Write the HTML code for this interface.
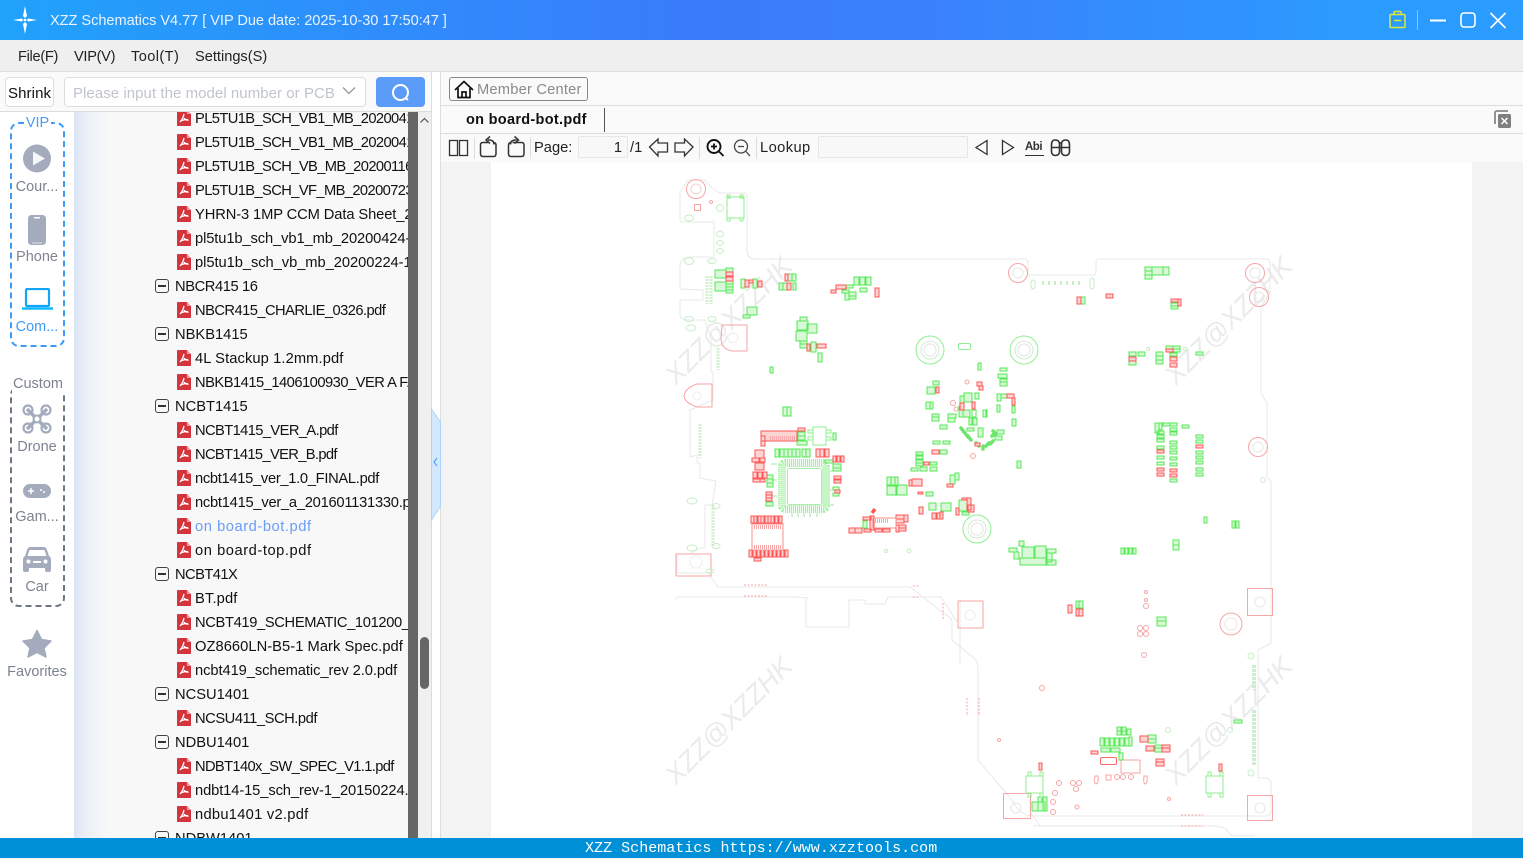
<!DOCTYPE html>
<html><head><meta charset="utf-8"><style>
*{box-sizing:border-box}
html,body{margin:0;padding:0;width:1523px;height:858px;overflow:hidden;background:#f3f3f3;font-family:"Liberation Sans","Noto Sans CJK SC",sans-serif;color:#111}
.a{position:absolute}
#title{left:0;top:0;width:1523px;height:40px;background:linear-gradient(90deg,#20a2fb 0,#3a7cfb 45%,#3a80fb 60%,#2b9cff 90%)}
#title .t{position:absolute;left:50px;top:1px;line-height:40px;font-size:14.6px;color:#e8f3ff;white-space:nowrap;letter-spacing:-.05px}
#menu{left:0;top:40px;width:1523px;height:32px;background:#efefef;border-bottom:1px solid #dcdcdc;font-size:14.6px}
#menu span{position:absolute;top:0;line-height:35px;color:#222}
#search{left:0;top:72px;width:431px;height:40px;background:#fafafa;border-bottom:1px solid #dcdcdc}
.box{position:absolute;top:5px;height:30px;border:1px solid #ddd;border-radius:4px;background:#fff;line-height:31px;font-size:15px}
#side{left:0;top:112px;width:74px;height:726px;background:#fff}
.lab{position:absolute;left:0;width:74px;text-align:center;font-size:14.5px;color:#7c8290;line-height:20px}
#tree{left:74px;top:112px;width:334px;height:726px;overflow:hidden;background:linear-gradient(90deg,#dbe5f5 0,#ebf0f8 12px,#f8f8f8 35px)}
#tree .in{position:absolute;left:0;top:-6px;width:334px}
.r{position:relative;height:24px;line-height:26px;font-size:14.7px;white-space:nowrap;color:#111}
.f{padding-left:121px}
.d{padding-left:101px}
.f svg{position:absolute;left:103px;top:4px}
.d i{position:absolute;left:81px;top:5px;width:14px;height:14px;border:1px solid #444;border-radius:3px}
.d i:after{content:"";position:absolute;left:2px;top:5px;width:8px;height:1.5px;background:#333}
</style></head><body>
<svg width="0" height="0" style="position:absolute"><defs>
<symbol id="pdf" viewBox="0 0 14 16"><path d="M1 0H10L14 4V15Q14 16 13 16H1Q0 16 0 15V1Q0 0 1 0Z" fill="#d5343c"/><path d="M10 0L14 4H10Z" fill="#f0a0a4"/><path d="M7 4C6.400 7 5 10 3 12M7 8C8.500 10 10 10.500 11.500 10.200M4 11C6 9.800 9 9.500 11 9.500" fill="none" stroke="#fff" stroke-width="1.300"/></symbol>
</defs></svg>

<div class="a" id="title">
<svg class="a" style="left:10px;top:4px" width="30" height="32" viewBox="0 0 30 32"><path d="M15 2L17 12L15 14L13 12ZM15 30L17 20L15 18L13 20ZM3 16L12 14.500L13 16L12 17.500ZM27 16L18 14.500L17 16L18 17.500Z" fill="#fff"/><circle cx="15" cy="16" r="1.400" fill="#fff"/></svg>
<div class="t">XZZ Schematics V4.77 [ VIP Due date: 2025-10-30 17:50:47 ]</div>
<svg class="a" style="left:1385px;top:8px" width="125" height="24" viewBox="0 0 125 24" fill="none"><path d="M6 6.500H19Q20 6.500 20 7.500V18.500Q20 19.500 19 19.500H6Q5 19.500 5 18.500V7.500Q5 6.500 6 6.500ZM9 6.500V4.500Q9 3.500 10 3.500H15Q16 3.500 16 4.500V6.500M9 12.500H16" stroke="#dfe63c" stroke-width="1.500"/><path d="M32.500 2V22" stroke="#8cc6ff" stroke-width="1"/><path d="M45 12.500H61" stroke="#fff" stroke-width="2"/><rect x="76" y="5" width="14" height="14" rx="3" stroke="#fff" stroke-width="1.600"/><path d="M105.500 5L120.500 20M120.500 5L105.500 20" stroke="#fff" stroke-width="1.600"/></svg>
</div>

<div class="a" id="menu"><span style="left:18px;letter-spacing:-.3px">File(F)</span><span style="left:74px;letter-spacing:-.3px">VIP(V)</span><span style="left:131px;letter-spacing:.4px">Tool(T)</span><span style="left:195px">Settings(S)</span></div>

<div class="a" id="search">
<div class="box" style="left:5px;width:49px;padding-left:2px;color:#111;letter-spacing:.1px">Shrink</div>
<div class="box" style="left:64px;width:302px;padding-left:8px;color:#c0c4cc;letter-spacing:.05px">Please input the model number or PCB
<svg class="a" style="left:277px;top:8px" width="14" height="10" viewBox="0 0 14 10" fill="none"><path d="M1 1.500L7 7.500L13 1.500" stroke="#999" stroke-width="1.300"/></svg></div>
<div class="a" style="left:376px;top:5px;width:49px;height:30px;background:#5a9cf8;border-radius:4px"><svg width="49" height="30" fill="none"><circle cx="24.500" cy="15.500" r="7.500" stroke="#fff" stroke-width="2"/><path d="M29.500 21L32 23" stroke="#fff" stroke-width="2"/></svg></div>
</div>

<div class="a" id="side">
<div class="a" style="left:10px;top:10px;width:55px;height:225px;border:2px dashed #3c9bf8;border-radius:9px"></div>
<div class="a" style="left:24px;top:3px;width:27px;height:16px;background:#fff;text-align:center;color:#4a9cf5;font-size:14.5px;line-height:16px">VIP</div>
<svg class="a" style="left:22px;top:32px" width="30" height="30"><circle cx="15" cy="14.500" r="14" fill="#a3abbd"/><path d="M11 7.500L23 14.500L11 21.500Z" fill="#fff" opacity=".9"/></svg>
<div class="lab" style="top:65px">Cour...</div>
<svg class="a" style="left:27px;top:103px" width="20" height="30"><rect x="1" y="0" width="18" height="30" rx="3.500" fill="#a3abbd"/><rect x="7" y="2" width="6" height="1.500" fill="#fff"/><rect x="5" y="27.500" width="10" height="1" fill="#e0e3ea"/></svg>
<div class="lab" style="top:135px;color:#80858f">Phone</div>
<svg class="a" style="left:22px;top:176px" width="31" height="24" fill="none"><rect x="4" y="1" width="23" height="17" rx="1" stroke="#12a5f5" stroke-width="2.200"/><path d="M0 20.500H31" stroke="#12b8ff" stroke-width="2.600"/></svg>
<div class="lab" style="top:205px;color:#3c9bf8">Com...</div>

<div class="a" style="left:10px;top:274px;width:55px;height:221px;border:2px dashed #6e7585;border-radius:9px"></div>
<div class="a" style="left:12px;top:263px;width:52px;height:18px;background:#fff;text-align:center;color:#7c8290;font-size:14.5px;line-height:18px">Custom</div>
<svg class="a" style="left:22px;top:292px" width="30" height="30" fill="none" stroke="#a3abbd"><g stroke-width="3.500"><path d="M5 5L25 25M25 5L5 25"/></g><g stroke-width="2.200"><circle cx="6" cy="6" r="4.500"/><circle cx="24" cy="6" r="4.500"/><circle cx="6" cy="24" r="4.500"/><circle cx="24" cy="24" r="4.500"/></g><circle cx="15" cy="15" r="3.500" fill="#fff" stroke-width="2"/></svg>
<div class="lab" style="top:325px">Drone</div>
<svg class="a" style="left:23px;top:372px" width="28" height="14"><rect width="28" height="14" rx="7" fill="#a3abbd"/><path d="M5 7H11M8 4V10" stroke="#fff" stroke-width="1.500"/><circle cx="18" cy="6" r="1" fill="#fff"/><circle cx="21" cy="8" r="1" fill="#fff"/></svg>
<div class="lab" style="top:395px">Gam...</div>
<svg class="a" style="left:23px;top:435px" width="28" height="25"><path d="M7 0H21Q23 0 24 3L26 9Q28 10 28 13V23Q28 25 26 25H24Q22 25 22 23V21H6V23Q6 25 4 25H2Q0 25 0 23V13Q0 10 2 9L4 3Q5 0 7 0Z" fill="#a3abbd"/><path d="M6.500 3H21.500L23.500 9H4.500Z" fill="#fff"/><circle cx="5.500" cy="14.500" r="2" fill="#fff"/><circle cx="22.500" cy="14.500" r="2" fill="#fff"/><rect x="10" y="14" width="8" height="2" fill="#fff"/></svg>
<div class="lab" style="top:465px">Car</div>
<svg class="a" style="left:22px;top:517px" width="30" height="30"><path d="M15 1.500L19.500 10.500L29 12L22 19L24 28L15 23.500L6 28L8 19L1 12L10.500 10.500Z" fill="#a3abbd" stroke="#a3abbd" stroke-width="1.500" stroke-linejoin="round"/></svg>
<div class="lab" style="top:550px">Favorites</div>
</div>

<div class="a" id="tree"><div class="in">
<div class="r f" style="letter-spacing:-.6px"><svg width="14" height="16"><use href="#pdf"/></svg>PL5TU1B_SCH_VB1_MB_20200417.pdf</div>
<div class="r f" style="letter-spacing:-.6px"><svg width="14" height="16"><use href="#pdf"/></svg>PL5TU1B_SCH_VB1_MB_20200417.pdf</div>
<div class="r f" style="letter-spacing:-.6px"><svg width="14" height="16"><use href="#pdf"/></svg>PL5TU1B_SCH_VB_MB_20200116.pdf</div>
<div class="r f" style="letter-spacing:-.6px"><svg width="14" height="16"><use href="#pdf"/></svg>PL5TU1B_SCH_VF_MB_20200723.pdf</div>
<div class="r f" style="letter-spacing:-.1px"><svg width="14" height="16"><use href="#pdf"/></svg>YHRN-3 1MP CCM Data Sheet_20.pdf</div>
<div class="r f" style="letter-spacing:-.1px"><svg width="14" height="16"><use href="#pdf"/></svg>pl5tu1b_sch_vb1_mb_20200424-1.pdf</div>
<div class="r f" style="letter-spacing:-.05px"><svg width="14" height="16"><use href="#pdf"/></svg>pl5tu1b_sch_vb_mb_20200224-1.pdf</div>
<div class="r d" style="letter-spacing:-.4px"><i></i>NBCR415 16</div>
<div class="r f" style="letter-spacing:-.54px"><svg width="14" height="16"><use href="#pdf"/></svg>NBCR415_CHARLIE_0326.pdf</div>
<div class="r d"><i></i>NBKB1415</div>
<div class="r f" style="letter-spacing:.1px"><svg width="14" height="16"><use href="#pdf"/></svg>4L Stackup 1.2mm.pdf</div>
<div class="r f" style="letter-spacing:-.5px"><svg width="14" height="16"><use href="#pdf"/></svg>NBKB1415_1406100930_VER A F.pdf</div>
<div class="r d"><i></i>NCBT1415</div>
<div class="r f" style="letter-spacing:-.6px"><svg width="14" height="16"><use href="#pdf"/></svg>NCBT1415_VER_A.pdf</div>
<div class="r f" style="letter-spacing:-.65px"><svg width="14" height="16"><use href="#pdf"/></svg>NCBT1415_VER_B.pdf</div>
<div class="r f" style="letter-spacing:-.3px"><svg width="14" height="16"><use href="#pdf"/></svg>ncbt1415_ver_1.0_FINAL.pdf</div>
<div class="r f" style="letter-spacing:-.25px"><svg width="14" height="16"><use href="#pdf"/></svg>ncbt1415_ver_a_201601131330.pdf</div>
<div class="r f" style="color:#6a9cf8;letter-spacing:.55px"><svg width="14" height="16"><use href="#pdf"/></svg>on board-bot.pdf</div>
<div class="r f" style="letter-spacing:.55px"><svg width="14" height="16"><use href="#pdf"/></svg>on board-top.pdf</div>
<div class="r d" style="letter-spacing:-.55px"><i></i>NCBT41X</div>
<div class="r f" style="letter-spacing:.15px"><svg width="14" height="16"><use href="#pdf"/></svg>BT.pdf</div>
<div class="r f" style="letter-spacing:-.35px"><svg width="14" height="16"><use href="#pdf"/></svg>NCBT419_SCHEMATIC_101200_IN.pdf</div>
<div class="r f" style="letter-spacing:.05px"><svg width="14" height="16"><use href="#pdf"/></svg>OZ8660LN-B5-1 Mark Spec.pdf</div>
<div class="r f" style="letter-spacing:-.07px"><svg width="14" height="16"><use href="#pdf"/></svg>ncbt419_schematic_rev 2.0.pdf</div>
<div class="r d"><i></i>NCSU1401</div>
<div class="r f" style="letter-spacing:-.45px"><svg width="14" height="16"><use href="#pdf"/></svg>NCSU411_SCH.pdf</div>
<div class="r d"><i></i>NDBU1401</div>
<div class="r f" style="letter-spacing:-.64px"><svg width="14" height="16"><use href="#pdf"/></svg>NDBT140x_SW_SPEC_V1.1.pdf</div>
<div class="r f" style="letter-spacing:-.1px"><svg width="14" height="16"><use href="#pdf"/></svg>ndbt14-15_sch_rev-1_20150224.pdf</div>
<div class="r f" style="letter-spacing:.27px"><svg width="14" height="16"><use href="#pdf"/></svg>ndbu1401 v2.pdf</div>
<div class="r d"><i></i>NDBW1401</div>
</div></div>

<div class="a" style="left:408px;top:112px;width:10px;height:726px;background:#666"></div>
<div class="a" style="left:418px;top:112px;width:13px;height:726px;background:#f0f0f0"></div>
<svg class="a" style="left:418px;top:114px" width="13" height="12" fill="none"><path d="M2.500 8.500L6.500 4.500L10.500 8.500" stroke="#444" stroke-width="1"/></svg>
<div class="a" style="left:420px;top:637px;width:9px;height:52px;background:#666;border-radius:5px"></div>
<div class="a" style="left:431px;top:72px;width:10px;height:766px;background:#fdfffd;border-left:1px solid #ddd;border-right:1px solid #ddd"></div>
<svg class="a" style="left:431px;top:408px" width="10" height="114"><path d="M0.500 1L9.500 14V98L0.500 112Z" fill="#d3e7fd" stroke="#aed4fb"/><path d="M6 50L3 54L6 58" fill="none" stroke="#5aa8f5" stroke-width="1.200"/></svg>

<div class="a" style="left:441px;top:72px;width:1082px;height:34px;background:#fafafa;border-bottom:1px solid #dcdcdc"></div>
<div class="a" style="left:449px;top:77px;width:139px;height:24px;border:1px solid #888;border-radius:3px;line-height:24px;font-size:14.7px;color:#8a8a8a;padding-left:27px;letter-spacing:.2px;white-space:nowrap">Member Center
<svg class="a" style="left:4px;top:2px" width="20" height="19" fill="none"><path d="M1 10L10 1.500L19 10M4 8V17.500H16V8M8 17.500V12H12V17.500" stroke="#111" stroke-width="1.700"/></svg></div>
<div class="a" style="left:441px;top:106px;width:1082px;height:28px;background:#fafafa;border-bottom:1px solid #dcdcdc"></div>
<div class="a" style="left:466px;top:107px;line-height:26px;font-size:14.5px;font-weight:bold;color:#111;letter-spacing:.3px">on board-bot.pdf</div>
<div class="a" style="left:604px;top:108px;width:1px;height:24px;background:#555"></div>
<svg class="a" style="left:1493px;top:109px" width="20" height="21" fill="none"><path d="M2 15V4Q2 2 4 2H15" stroke="#888" stroke-width="1.800"/><rect x="5" y="5" width="13" height="14" rx="1.500" fill="#808080"/><path d="M8.500 9L14.500 15M14.500 9L8.500 15" stroke="#fff" stroke-width="1.500"/></svg>

<div class="a" style="left:441px;top:134px;width:1082px;height:28px;background:#fafafa"></div>
<svg class="a" style="left:441px;top:134px" width="640" height="28" fill="none" stroke="#333" stroke-width="1.300">
<rect x="8.500" y="6.500" width="8" height="15"/><rect x="18.500" y="6.500" width="8" height="15"/>
<path d="M33.500 3V25M89.500 3V25M258.500 3V25M315.500 3V25" stroke="#ddd" stroke-width="1"/>
<path d="M47 8.500H42Q39.500 8.500 39.500 11V19.500Q39.500 22.500 42 22.500H52.500Q55 22.500 55 19.500V11Q55 9 53 8.500" stroke-width="1.500"/><path d="M53 10.500Q53 5.500 47 6M49 2.500L45 6L49 9.500" stroke-width="1.500"/>
<path d="M71.500 8.500H80.500Q83 8.500 83 11V19.500Q83 22.500 80.500 22.500H70Q67.500 22.500 67.500 19.500V11Q67.500 9 69.500 8.500" stroke-width="1.500"/><path d="M69.500 10.500Q69.500 5.500 75.500 6M73.500 2.500L77.500 6L73.500 9.500" stroke-width="1.500"/>
<path d="M208.500 13L217 5V9H226.500V18H217V22Z" stroke-width="1.300"/>
<path d="M252 13L243.500 5V9H234V18H243.500V22Z" stroke-width="1.300"/>
<circle cx="273" cy="12.500" r="6.500" stroke="#111" stroke-width="1.900"/><path d="M278 17.500L282.500 22M270 12.500H276M273 9.500V15.500" stroke="#111" stroke-width="1.800"/>
<circle cx="300" cy="12.500" r="6.500" stroke="#444"/><path d="M305 17.500L309 22M297 12.500H303" stroke="#444"/>
<path d="M546 6.500L535 13.500L546 20.500Z"/><path d="M561.500 6.500L572.500 13.500L561.500 20.500Z"/>
<path d="M584 21.500H603" stroke-width="1"/>
<path d="M610.500 18V11Q610.500 6 614 6Q618.500 6 618.500 10V18A4 3.500 0 1 1 610.500 18ZM620.500 18V10Q620.500 6 625 6Q628.500 6 628.500 11V18A4 3.500 0 1 1 620.500 18Z" stroke-width="1.600"/><path d="M611 13.500H628M618 9H621" stroke-width="1.500"/>
</svg>
<div class="a" style="left:1025px;top:140px;font-size:11.5px;line-height:14px;font-weight:bold;color:#333;letter-spacing:-.5px">Abi</div>
<div class="a" style="left:534px;top:134px;line-height:28px;font-size:14.7px;color:#222">Page:</div>
<div class="a" style="left:578px;top:136px;width:50px;height:22px;background:#f8f8f8;border:1px solid #e6e6e6;border-radius:2px;text-align:right;padding-right:5px;line-height:22px;font-size:14.7px;color:#222">1</div>
<div class="a" style="left:630px;top:134px;line-height:28px;font-size:14.7px;color:#222">/1</div>
<div class="a" style="left:760px;top:134px;line-height:28px;font-size:14.7px;color:#222;letter-spacing:.4px">Lookup</div>
<div class="a" style="left:818px;top:136px;width:150px;height:22px;background:#f8f8f8;border:1px solid #e6e6e6;border-radius:2px"></div>

<div class="a" style="left:491px;top:162px;width:981px;height:676px;background:#fff"></div>

<svg class="a" style="left:0;top:0" width="1523" height="858" fill="none">
<g font-family="Liberation Sans,sans-serif" font-size="27" fill="#ebebeb" stroke="none" font-style="italic">
<text transform="translate(676,386) rotate(-45)">XZZ@XZZHK</text>
<text transform="translate(1176,386) rotate(-45)">XZZ@XZZHK</text>
<text transform="translate(676,786) rotate(-45)">XZZ@XZZHK</text>
<text transform="translate(1176,786) rotate(-45)">XZZ@XZZHK</text>
</g>
<!-- outline -->
<path stroke="#e8e8e8" d="M680 192L688 180H705Q712 190 720 193H744Q747 193 747 197V252Q748 259 756 259H1024Q1028 259 1028 263V275H1094Q1096 275 1096 271V262Q1096 259 1100 259H1266Q1270 259 1270 263V293L1261 307V393L1267 403V477L1271 481V643L1258 650V778H1268Q1271 780 1271 784V811Q1271 816 1266 816H1033Q1020 816 1012 800L978 760V668Q978 660 970 655L952 640V622Q952 618 946 615L910 587H718L708 573H677V554H690Q700 547 705 548V505H712L716 481L700 478V463H697V455L690 457V410L713 400V372L711 372V340L705 320H690Q680 320 680 315V300H703V290L680 289V266Q680 258 690 257H714V222H682Q680 222 680 218Z"/>
<path stroke="#e8e8e8" d="M676 597H795L808 598H806V627H849V600H865V604H885L888 597H941L957 622M806 597V627M1033 826H1215L1225 828L1232 836H1255M676 600V598M960 600V665M1030 800V812L1040 826"/>
<!-- red rings -->
<g stroke="#f7a6a6">
<circle cx="696" cy="189" r="9.500"/><circle cx="696" cy="189" r="5" stroke="#f3d0d0"/><rect x="694.500" y="204.500" width="6" height="6"/><circle cx="711" cy="202" r="1.500"/>
<path d="M722 325H747V351H732Q721 349 721 338Z"/><circle cx="733" cy="338" r="5" stroke="#eee"/>
<path d="M712 384V407H697Q685 403 684 396Q685 388 697 384Z"/><circle cx="697" cy="396" r="4" stroke="#eee"/>
<rect x="676" y="554" width="35" height="22"/><circle cx="696" cy="562" r="6" stroke="#eee"/>
<rect x="958" y="601" width="25" height="27"/><circle cx="970" cy="615" r="5" stroke="#eee"/>
<circle cx="1018" cy="273" r="9.500"/><circle cx="1018" cy="273" r="5" stroke="#e8e8e8"/>
<circle cx="1255" cy="273" r="9.500"/><circle cx="1255" cy="273" r="5" stroke="#e8e8e8"/>
<circle cx="1259" cy="297" r="9.500"/><circle cx="1259" cy="297" r="5" stroke="#e8e8e8"/>
<circle cx="1258" cy="447" r="9.500"/><circle cx="1258" cy="447" r="5" stroke="#e8e8e8"/>
<circle cx="1231" cy="624" r="11"/><circle cx="1231" cy="624" r="6" stroke="#e8e8e8"/>
<rect x="1247.500" y="588.500" width="25" height="27"/><circle cx="1260" cy="602" r="5" stroke="#e8e8e8"/>
<rect x="1247.500" y="795.500" width="25" height="25"/><circle cx="1260" cy="808" r="5" stroke="#e8e8e8"/>
<rect x="1003.500" y="793.500" width="27" height="25"/><circle cx="1016" cy="808" r="5" stroke="#e8e8e8"/>
<circle cx="1042" cy="688" r="2.500"/><circle cx="1146" cy="606" r="2.500"/><circle cx="1140" cy="628" r="2.500"/><circle cx="1146" cy="628" r="2.500"/><circle cx="1140" cy="634" r="2.500"/><circle cx="1146" cy="634" r="2.500"/><circle cx="1144" cy="655" r="2.500"/><circle cx="1146" cy="592" r="1.500"/><circle cx="1146" cy="600" r="1.500"/><circle cx="1169" cy="799" r="1.500"/><circle cx="999" cy="740" r="1.500"/>
<circle cx="967" cy="382" r="2"/><circle cx="953" cy="403" r="2.500"/><circle cx="956" cy="409" r="2"/><circle cx="973" cy="456" r="2.500"/>
<circle cx="1059" cy="783" r="2.500"/><circle cx="1073" cy="783" r="2.500"/><circle cx="1079" cy="783" r="2.500"/><circle cx="1076" cy="789" r="2.500"/><circle cx="1055" cy="793" r="2.500"/><circle cx="1053" cy="802" r="2.500"/><circle cx="1053" cy="812" r="2.500"/><circle cx="1077" cy="807" r="2"/><path d="M1095 776H1098Q1099 783 1096 784Q1093 783 1095 776ZM1144 776H1147Q1148 783 1145 784Q1143 783 1144 776Z"/><rect x="1121" y="760" width="19" height="13"/>
<circle cx="1117" cy="777" r="2.500"/><circle cx="1123" cy="777" r="2.500"/><circle cx="1131" cy="777" r="2.500"/><rect x="1106" y="775" width="5" height="5"/>
<path stroke-dasharray="2 1.500" d="M744 585H768M744 596H768M913 586H920M913 597H920M943 603V620M1181 815H1203M1181 826H1203M967 698V716M979 698V716"/>
</g>
<!-- light-green non comps -->
<g stroke="#c5eec5">
<circle cx="720" cy="208" r="3.500"/><ellipse cx="689" cy="218" rx="4.500" ry="3"/><ellipse cx="720" cy="234" rx="3.500" ry="3"/><ellipse cx="720" cy="243" rx="3.500" ry="2.500"/><ellipse cx="720" cy="251" rx="3.500" ry="2.500"/><ellipse cx="689" cy="261" rx="4.500" ry="3.500"/><ellipse cx="712" cy="261" rx="4" ry="2.500"/><ellipse cx="689" cy="319" rx="4.500" ry="2.500"/><ellipse cx="712" cy="319" rx="4" ry="2.500"/><ellipse cx="691" cy="328" rx="5" ry="3"/><ellipse cx="710" cy="571" rx="4" ry="2"/>
<path stroke-dasharray="2 1" stroke-width="3" stroke="#d0f0d0" d="M707 276V304M711 276V304M718 348V370M700 424V458M713 505V546"/>
<path d="M1031 282Q1033 278 1035 282V287Q1033 291 1031 287ZM1090 280Q1092 276 1094 280V287Q1092 291 1090 287Z"/>
<path stroke-dasharray="2 4" stroke-width="4" d="M1042 283H1082"/>
<ellipse cx="692" cy="501" rx="5" ry="3"/><ellipse cx="692" cy="548" rx="5" ry="3"/><ellipse cx="716" cy="506" rx="4" ry="2.500"/><ellipse cx="716" cy="546" rx="4" ry="2.500"/>
<path stroke-dasharray="3 1" stroke-width="4" stroke="#cfeccf" d="M1254 665V690M1254 710V765"/>
<circle cx="1251" cy="656" r="3"/><circle cx="1251" cy="773" r="3"/><circle cx="1263" cy="480" r="2.500"/><circle cx="1168" cy="730" r="2.500"/><circle cx="1230" cy="730" r="2.500"/><circle cx="1148" cy="349" r="1.500"/><circle cx="1185" cy="349" r="1.500"/><circle cx="886" cy="551" r="1.500"/><circle cx="909" cy="551" r="2"/>
</g>
<!-- big green rings -->
<g stroke="#8ef08e">
<circle cx="930" cy="350" r="14"/><circle cx="930" cy="350" r="9" stroke="#cfeccf"/><circle cx="930" cy="350" r="6" stroke="#e4e4e4"/>
<circle cx="1024" cy="350" r="14"/><circle cx="1024" cy="350" r="9" stroke="#cfeccf"/><circle cx="1024" cy="350" r="6" stroke="#e4e4e4"/>
<circle cx="977" cy="529" r="14"/><circle cx="977" cy="529" r="9" stroke="#cfeccf"/><circle cx="977" cy="529" r="6" stroke="#e4e4e4"/>
<rect x="958.500" y="343.500" width="12" height="6" rx="1.500"/>
</g>
<!-- QFP -->
<rect x="782" y="463" width="44" height="46" rx="3" stroke="#a5f0a5" stroke-width="8" stroke-dasharray="1.200 .8"/>
<rect x="787.500" y="468.500" width="34" height="36" rx="2" fill="#fff" stroke="#a8eea8"/>
<path stroke="#9fe89f" d="M792 513V517M798 513V517M804 513V517M810 513V517M817 513V517M771 464H777M771 480H777M771 496H777M830 471H834M830 490H834M830 505H834"/>
<!-- green parts -->
<path stroke="#55e855" fill="#d8f8d8" d="M726 268h7v4h-7zM726 281h7v3h-7zM726 284h7v3h-7zM726 287h7v3h-7zM726 290h7v3h-7zM715 270h11v8h-11zM715 282h11v9h-11zM741 279h4v9h-4zM753 279h4v9h-4zM788 274h4v7h-4zM792 274h4v7h-4zM779 283h4v7h-4zM783 283h4v7h-4zM787 283h4v7h-4zM793 283h3v7h-3zM747 307h10v8h-10zM743 315h7v3h-7zM854 277h5v8h-5zM860 277h5v8h-5zM866 277h5v8h-5zM846 285h7v3h-7zM842 290h7v3h-7zM845 293h4v7h-4zM849 292h7v4h-7zM849 296h7v3h-7zM860 288h7v4h-7zM800 317h7v4h-7zM797 321h11v9h-11zM807 324h10v9h-10zM796 331h11v10h-11zM800 341h7v3h-7zM800 344h7v4h-7zM811 342h5v10h-5zM818 353h4v9h-4zM770 367h3v6h-3zM783 407h4v9h-4zM787 407h4v9h-4zM798 432h7v4h-7zM798 436h7v4h-7zM797 441h10v4h-10zM833 433h3v7h-3zM775 449h4v8h-4zM780 449h4v8h-4zM784 449h4v8h-4zM788 449h4v8h-4zM792 449h4v8h-4zM796 449h4v8h-4zM802 449h4v8h-4zM806 449h4v8h-4zM767 475h6v4h-6zM767 479h6v4h-6zM767 483h6v4h-6zM766 502h7v4h-7zM825 460h8v3h-8zM833 464h8v4h-8zM833 468h8v3h-8zM833 487h6v3h-6zM833 493h6v3h-6zM927 387h8v7h-8zM933 381h6v4h-6zM926 402h4v7h-4zM930 402h3v7h-3zM932 414h7v3h-7zM932 417h7v4h-7zM948 414h8v4h-8zM948 418h7v4h-7zM940 425h7v4h-7zM959 406h4v11h-4zM963 410h7v7h-7zM972 410h4v7h-4zM976 410h-4v8h4zM969 418h4v7h-4zM972 418h5v7h-5zM978 428h5v9h-5zM983 410h4v7h-4zM960 396h4v7h-4zM964 393h8v9h-8zM975 393h4v6h-4zM978 363h3v7h-3zM1000 368h7v3h-7zM998 374h9v4h-9zM1000 379h7v3h-7zM1000 382h7v4h-7zM997 394h4v7h-4zM1001 394h7v4h-7zM997 405h3v7h-3zM1012 406h3v7h-3zM1012 419h4v7h-4zM983 410h3v7h-3zM997 430h7v4h-7zM995 436h7v4h-7zM1017 461h4v7h-4zM933 441h7v3h-7zM943 441h7v3h-7zM940 450h7v4h-7zM916 452h7v3h-7zM916 456h7v3h-7zM916 460h7v3h-7zM916 463h7v3h-7zM911 468h7v3h-7zM920 467h7v4h-7zM930 462h7v3h-7zM930 467h7v4h-7zM950 475h5v9h-5zM955 473h4v7h-4zM887 477h4v9h-4zM891 477h4v9h-4zM895 477h3v9h-3zM887 485h9v10h-9zM897 485h10v10h-10zM926 492h7v4h-7zM929 503h7v7h-7zM941 503h10v8h-10zM959 500h8v11h-8zM962 512h7v3h-7zM863 521h4v7h-4zM967 428h7v3h-7zM1145 267h7v4h-7zM1145 271h7v4h-7zM1145 275h7v4h-7zM1152 267h11v8h-11zM1163 267h6v8h-6zM1081 297h4v7h-4zM1171 303h7v3h-7zM1171 306h7v3h-7zM1129 352h7v4h-7zM1129 361h7v4h-7zM1138 352h7v4h-7zM1156 352h7v4h-7zM1156 356h7v4h-7zM1156 360h7v4h-7zM1166 346h7v3h-7zM1173 346h7v3h-7zM1173 349h7v3h-7zM1170 353h7v3h-7zM1196 352h7v3h-7zM1155 423h4v10h-4zM1159 423h3v7h-3zM1163 423h7v3h-7zM1170 423h7v3h-7zM1182 425h7v3h-7zM1157 431h7v3h-7zM1157 435h7v3h-7zM1157 439h7v3h-7zM1157 446h7v3h-7zM1157 456h7v3h-7zM1157 462h7v3h-7zM1170 428h7v3h-7zM1170 432h7v3h-7zM1170 441h7v3h-7zM1170 446h7v3h-7zM1170 451h7v3h-7zM1170 457h7v3h-7zM1170 463h7v3h-7zM1170 479h7v3h-7zM1196 435h7v3h-7zM1196 440h7v3h-7zM1196 451h7v3h-7zM1196 456h7v3h-7zM1196 461h7v3h-7zM1196 468h7v3h-7zM1196 473h7v3h-7zM1204 517h3v6h-3zM1232 521h3v7h-3zM1236 521h3v7h-3zM1173 540h6v5h-6zM1173 545h6v5h-6zM1121 548h3v6h-3zM1125 548h3v6h-3zM1129 548h3v6h-3zM1133 548h3v6h-3zM1019 541h5v5h-5zM1009 548h8v4h-8zM1014 552h5v7h-5zM1022 547h12v11h-12zM1035 546h11v12h-11zM1047 549h9v4h-9zM1047 553h5v9h-5zM1047 560h9v5h-9zM1020 558h26v7h-26zM1076 601h3v7h-3zM1079 601h4v7h-4zM1157 617h9v4h-9zM1157 621h9v5h-9zM1117 727h4v4h-4zM1117 731h4v4h-4zM1122 727h4v4h-4zM1122 731h4v4h-4zM1127 729h4v6h-4zM1100 738h4v8h-4zM1105 738h4v8h-4zM1110 738h4v8h-4zM1115 738h4v8h-4zM1120 738h4v8h-4zM1125 738h4v8h-4zM1129 737h3v9h-3zM1101 748h9v4h-9zM1111 748h9v4h-9zM1119 753h4v7h-4zM1148 735h8v4h-8zM1148 739h8v4h-8zM1155 745h7v3h-7zM1155 748h7v4h-7zM1234 720h8v3h-8zM1032 802h6v9h-6zM1038 802h7v9h-7zM1038 797h4v5h-4zM1043 797h4v14h-4z"/>
<!-- green outlined -->
<path stroke="#8fef8f" d="M727 197h17v21h-17zM727 195h3v3h-3zM740 195h3v3h-3zM727 218h3v3h-3zM740 218h3v3h-3zM813 427h13v18h-13zM808 430h5v3h-5zM808 437h5v3h-5zM826 430h5v3h-5zM826 437h5v3h-5zM1026 776h17v17h-17zM1028 772h3v4h-3zM1040 772h3v4h-3zM1028 793h3v4h-3zM1040 793h3v4h-3zM1206 776h17v17h-17zM1208 772h3v4h-3zM1220 772h3v4h-3zM1208 793h3v4h-3zM1220 793h3v4h-3z"/>
<path stroke="#6de56d" stroke-width="3.500" stroke-linecap="round" d="M961 428L964 432M965 433L968 437M968 436L971 440M976 443L979 446M983 446L983 449M986 446L989 443M990 444L993 441M992 436L995 433M993 431L996 434"/>
<!-- red parts -->
<path stroke="#f55" fill="#fbd4d4" d="M726 272h7v4h-7zM726 277h7v4h-7zM745 280h4v7h-4zM749 280h4v3h-4zM758 281h4v6h-4zM785 274h3v7h-3zM787 283h4v7h-4zM836 285h10v4h-10zM831 290h5v3h-5zM875 288h4v9h-4zM807 344h3v7h-3zM817 344h9v4h-9zM936 387h3v6h-3zM977 382h5v4h-5zM979 386h4v4h-4zM960 403h4v7h-4zM972 402h3v7h-3zM1007 394h7v4h-7zM1012 398h3v7h-3zM975 443h5v3h-5zM932 450h7v4h-7zM924 462h5v3h-5zM947 484h6v3h-6zM909 480h3v6h-3zM912 479h10v7h-10zM918 492h5v2h-5zM919 507h4v7h-4zM932 513h4v6h-4zM937 513h3v6h-3zM940 512h3v7h-3zM956 508h3v7h-3zM962 498h5v2h-5zM967 498h4v12h-4zM968 505h6v7h-6zM1077 297h4v7h-4zM1106 294h7v4h-7zM1171 299h7v3h-7zM1178 299h3v7h-3zM1129 357h7v4h-7zM1166 349h7v3h-7zM1170 357h7v4h-7zM1170 363h7v4h-7zM1157 450h7v3h-7zM1157 468h7v3h-7zM1157 473h7v3h-7zM1170 469h7v3h-7zM1170 474h7v3h-7zM1196 445h7v3h-7zM1068 605h4v8h-4zM1076 609h3v7h-3zM1079 609h4v7h-4zM1140 736h8v6h-8zM1146 746h8v5h-8zM1162 745h8v3h-8zM1162 748h8v4h-8zM1156 759h8v3h-8zM1156 762h8v4h-8zM1091 751h7v3h-7zM1039 763h3v7h-3zM1219 764h3v7h-3zM798 428h7v3h-7zM761 431h36v10h-36zM761 436h4v10h-4zM816 449h4v8h-4zM820 449h4v8h-4zM825 449h4v8h-4zM833 456h3v6h-3zM837 456h3v6h-3zM841 456h3v6h-3zM834 476h7v3h-7zM834 480h7v3h-7zM835 490h5v3h-5zM755 450h9v8h-9zM752 458h7v4h-7zM760 458h5v4h-5zM755 463h9v7h-9zM753 472h4v6h-4zM758 472h4v6h-4zM763 472h4v6h-4zM753 479h7v3h-7zM760 479h5v3h-5zM766 492h6v3h-6zM766 495h6v3h-6zM766 498h6v3h-6zM751 516h3v7h-3zM754 516h3v7h-3zM758 516h3v7h-3zM761 516h3v7h-3zM765 516h3v7h-3zM768 516h3v7h-3zM771 516h3v7h-3zM775 516h3v7h-3zM779 516h3v7h-3zM749 550h3v7h-3zM753 550h3v7h-3zM757 550h3v7h-3zM761 550h3v7h-3zM765 550h3v7h-3zM769 550h3v7h-3zM773 550h3v7h-3zM777 550h3v7h-3zM781 550h3v7h-3zM785 550h3v7h-3zM754 558h7v3h-7zM849 528h6v5h-6zM855 528h7v5h-7zM863 517h8v3h-8zM870 516h4v14h-4zM864 529h7v3h-7zM875 529h7v3h-7zM883 529h7v3h-7zM896 515h8v4h-8zM904 515h4v7h-4zM896 519h8v4h-8zM896 525h3v7h-3zM899 525h7v3h-7zM899 528h7v3h-7z"/>
<path stroke="#f88" d="M752 524h31v26h-31zM873 518h23v10h-23z"/>
<path stroke="#f4a8a8" stroke-dasharray="1 1" stroke-width="4" d="M770 438h26M754 527h28M754 547h28M875 521h14"/>
<path stroke="#f55" stroke-width="3.500" d="M872 513L875 509"/>
<rect x="1100.500" y="757.500" width="16" height="7" rx="1.500" stroke="#f66" fill="#fff"/>
</svg>

<div class="a" style="left:0;top:838px;width:1523px;height:20px;background:#0090d7;color:#fff;font-family:'Liberation Mono',monospace;font-size:15px;line-height:21px;white-space:pre;padding-left:585px;letter-spacing:.03px">XZZ Schematics https://www.xzztools.com</div>
</body></html>
